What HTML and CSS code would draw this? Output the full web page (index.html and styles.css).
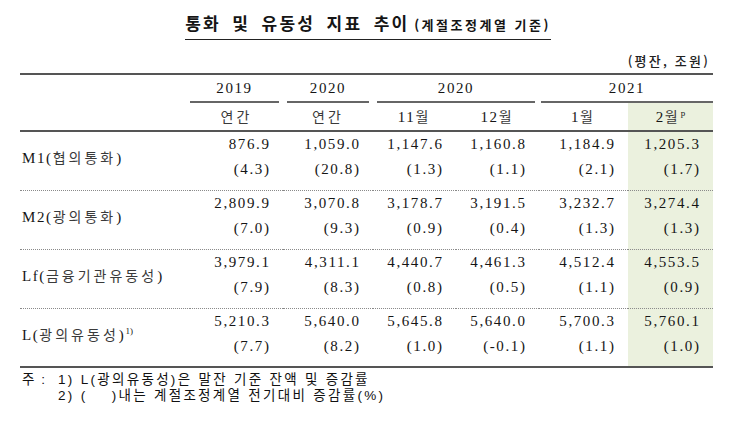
FILE: index.html
```html
<!DOCTYPE html>
<html lang="ko">
<head>
<meta charset="utf-8">
<title>통화 및 유동성 지표 추이</title>
<link rel="stylesheet" href="styles.css">
</head>
<body>
<div class="page">
  <h1 class="title"><span class="title-inner"><span class="title-main">통화 및 유동성 지표 추이</span> <span class="title-sub">(계절조정계열 기준)</span></span></h1>
  <div class="unit">(평잔, 조원)</div>
  <table class="data">
    <colgroup>
      <col class="c-label">
      <col class="c1">
      <col class="c2">
      <col class="c3">
      <col class="c4">
      <col class="c5">
      <col class="c6">
    </colgroup>
    <thead>
      <tr class="years">
        <th class="corner" rowspan="2"></th>
        <th><div class="yr yr-first">2019</div></th>
        <th><div class="yr">2020</div></th>
        <th colspan="2"><div class="yr">2020</div></th>
        <th colspan="2"><div class="yr yr-last">2021</div></th>
      </tr>
      <tr class="periods">
        <th><span class="ko">연간</span></th>
        <th><span class="ko">연간</span></th>
        <th>11<span class="ko">월</span></th>
        <th>12<span class="ko">월</span></th>
        <th>1<span class="ko">월</span></th>
        <th class="hl">2<span class="ko">월</span><sup class="sup">p</sup></th>
      </tr>
    </thead>
    <tbody>
      <tr class="val">
        <th class="label" rowspan="2">M1(<span class="ko">협의통화</span>)</th>
        <td>876.9</td><td>1,059.0</td><td>1,147.6</td><td>1,160.8</td><td>1,184.9</td><td class="hl">1,205.3</td>
      </tr>
      <tr class="pct">
        <td>(4.3)</td><td>(20.8)</td><td>(1.3)</td><td>(1.1)</td><td>(2.1)</td><td class="hl">(1.7)</td>
      </tr>
      <tr class="val">
        <th class="label" rowspan="2">M2(<span class="ko">광의통화</span>)</th>
        <td>2,809.9</td><td>3,070.8</td><td>3,178.7</td><td>3,191.5</td><td>3,232.7</td><td class="hl">3,274.4</td>
      </tr>
      <tr class="pct">
        <td>(7.0)</td><td>(9.3)</td><td>(0.9)</td><td>(0.4)</td><td>(1.3)</td><td class="hl">(1.3)</td>
      </tr>
      <tr class="val">
        <th class="label" rowspan="2">Lf(<span class="ko">금융기관유동성</span>)</th>
        <td>3,979.1</td><td>4,311.1</td><td>4,440.7</td><td>4,461.3</td><td>4,512.4</td><td class="hl">4,553.5</td>
      </tr>
      <tr class="pct">
        <td>(7.9)</td><td>(8.3)</td><td>(0.8)</td><td>(0.5)</td><td>(1.1)</td><td class="hl">(0.9)</td>
      </tr>
      <tr class="val">
        <th class="label last" rowspan="2">L(<span class="ko">광의유동성</span>)<sup class="sup">1)</sup></th>
        <td>5,210.3</td><td>5,640.0</td><td>5,645.8</td><td>5,640.0</td><td>5,700.3</td><td class="hl">5,760.1</td>
      </tr>
      <tr class="pct last">
        <td>(7.7)</td><td>(8.2)</td><td>(1.0)</td><td>(-0.1)</td><td>(1.1)</td><td class="hl">(1.0)</td>
      </tr>
    </tbody>
  </table>
  <div class="notes">
    <span class="notes-head">주 :</span>
    <div class="notes-body">
      <div>1) L(광의유동성)은 말잔 기준 잔액 및 증감률</div>
      <div>2) (&nbsp;&nbsp;&nbsp;&nbsp;)내는 계절조정계열 전기대비 증감률(%)</div>
    </div>
  </div>
</div>
</body>
</html>
```

FILE: styles.css
```css
html, body {
  margin: 0;
  padding: 0;
  background: #ffffff;
}

.page {
  width: 730px;
  height: 428px;
  color: #151515;
}

.title {
  margin: 0;
  padding-top: 11px;
  padding-left: 6px;
  text-align: center;
  font-family: "Noto Sans CJK KR", sans-serif;
  font-size: 17px;
  font-weight: 700;
  line-height: 24px;
  height: 30px;
}

.title-inner {
  display: inline-block;
  vertical-align: top;
  border-bottom: 1.5px solid #222;
  padding-bottom: 2px;
}

.title-main {
  font-size: 17px;
  letter-spacing: 2.2px;
  word-spacing: 4.5px;
}

.title-sub {
  font-size: 13px;
  letter-spacing: 2.5px;
}

.unit {
  margin-top: 10px;
  margin-bottom: 2px;
  padding-right: 20px;
  text-align: right;
  font-family: "Noto Sans CJK KR", sans-serif;
  font-size: 13px;
  letter-spacing: 2.2px;
  line-height: 20px;
  font-weight: 500;
  color: #222;
}

.data {
  margin-left: 20px;
  border-collapse: separate;
  border-spacing: 0;
  table-layout: fixed;
  width: 693px;
  font-family: "Liberation Serif", "Noto Sans CJK KR", serif;
  font-size: 15px;
  letter-spacing: 1.6px;
  color: #151515;
}

.c-label { width: 170px; }
.c1 { width: 93px; }
.c2 { width: 90px; }
.c3 { width: 83px; }
.c4 { width: 83px; }
.c5 { width: 89px; }
.c6 { width: 85px; }

.data th {
  font-weight: 400;
  padding: 0;
}

.years th {
  border-top: 2px solid #555;
}

.corner {
  border-top: 2px solid #555;
  border-bottom: 2px solid #555;
}

.yr {
  height: 26px;
  line-height: 26px;
  border-bottom: 2px solid #666;
  margin: 0 4px;
  text-align: center;
}

.yr-first { margin-left: 0; }
.yr-last { margin-right: 0; margin-left: 2px; }

.periods th {
  line-height: 26px;
  border-bottom: 2px solid #555;
  text-align: center;
}

.ko {
  font-family: "Noto Sans CJK KR", sans-serif;
  font-size: 14px;
  letter-spacing: 3px;
  color: #3a3a3a;
}

.sup {
  font-size: 9px;
  letter-spacing: 0;
  vertical-align: 6px;
  line-height: 0;
}

.data td {
  text-align: right;
  padding-right: 12.5px;
  line-height: 20px;
  white-space: nowrap;
}

.val td {
  padding-top: 2px;
  padding-bottom: 4px;
}

.pct td {
  padding-top: 1px;
  padding-bottom: 11px;
  border-bottom: 1px dotted #8a8a8a;
}

.label {
  text-align: left;
  padding-left: 2px !important;
  padding-bottom: 8px !important;
  vertical-align: middle;
  border-bottom: 1px dotted #8a8a8a;
  white-space: nowrap;
}

.label.last,
.pct.last td {
  border-bottom: 2px solid #555;
}

.pct.last td {
  padding-bottom: 10px;
}

.hl {
  background: #ebf1de;
}

.notes {
  display: flex;
  margin-top: 4px;
  padding-left: 22px;
  font-family: "Liberation Sans", "Noto Sans CJK KR", sans-serif;
  font-size: 13.5px;
  line-height: 16px;
  letter-spacing: 2.3px;
  color: #111;
}

.notes-head {
  width: 36px;
  flex: none;
  letter-spacing: 1.5px;
}
```
